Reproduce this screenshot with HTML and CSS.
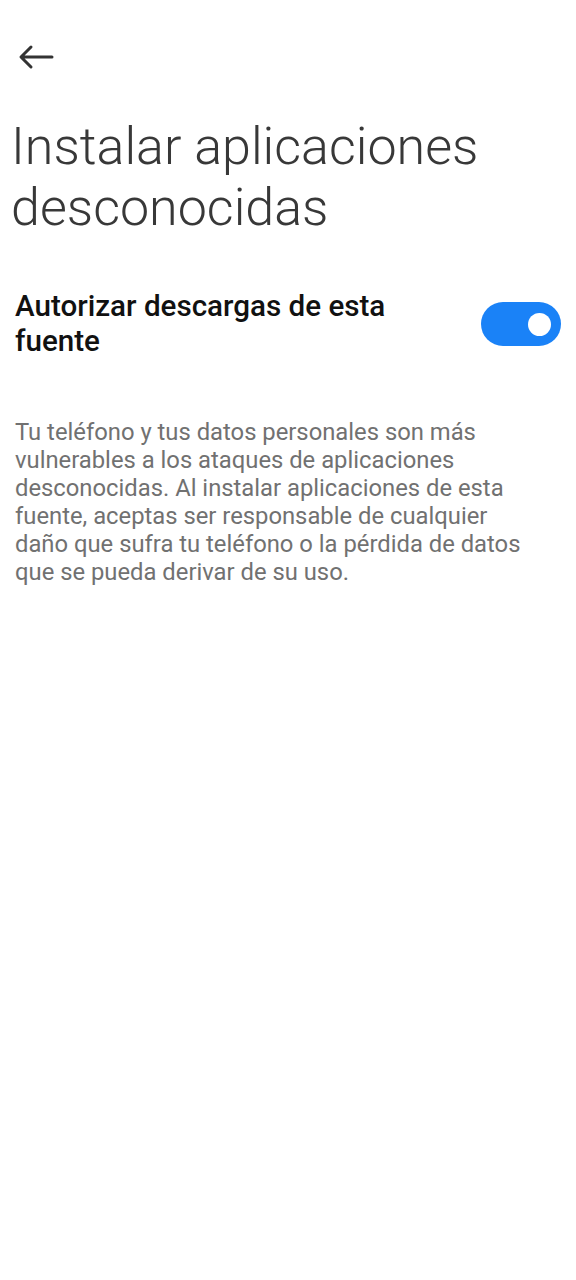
FILE: index.html
```html
<!DOCTYPE html>
<html lang="es">
<head>
<meta charset="utf-8">
<link rel="stylesheet" href="styles.css">
</head>
<body>
<div class="page">
  <header class="topbar">
    <svg class="back" width="40" height="30" viewBox="0 0 40 30">
      <path d="M35 15 H5 M14 5 L4 15 L14 25" fill="none" stroke="#333" stroke-width="3" stroke-linecap="round" stroke-linejoin="round"/>
    </svg>
  </header>
  <h1 class="title">Instalar aplicaciones desconocidas</h1>
  <div class="row">
    <div class="row-label">Autorizar descargas de esta fuente</div>
    <div class="toggle"><div class="knob"></div></div>
  </div>
  <p class="desc">Tu teléfono y tus datos personales son más vulnerables a los ataques de aplicaciones desconocidas. Al instalar aplicaciones de esta fuente, aceptas ser responsable de cualquier daño que sufra tu teléfono o la pérdida de datos que se pueda derivar de su uso.</p>
</div>
</body>
</html>
```
FILE: styles.css
```css
html, body { margin: 0; padding: 0; background: #fff; }
body { font-family: Roboto, "Noto Sans", sans-serif; width: 576px; height: 1280px; }
.page { display: flex; flex-direction: column; }
.topbar { height: 116px; display: flex; align-items: flex-start; padding: 42px 0 0 17px; box-sizing: border-box; }
.back { display: block; }
.title { margin: 0; padding: 0 20px 0 11px; font-weight: 300; font-size: 52px; line-height: 61px; color: #383838; letter-spacing: 0; }
.row { display: flex; align-items: center; justify-content: space-between; padding: 0 15px 0 15px; margin-top: 51px; }
.row-label { font-weight: 500; font-size: 29.6px; line-height: 35px; color: #111; width: 410px; }
.toggle { width: 80px; height: 44px; border-radius: 22px; background: #1a82f7; display: flex; align-items: center; justify-content: flex-end; padding-right: 10px; box-sizing: border-box; flex-shrink: 0; }
.knob { width: 23px; height: 23px; border-radius: 50%; background: #fff; }
.desc { margin: 59px 0 0; padding: 0 38px 0 15px; font-size: 23.8px; line-height: 28px; letter-spacing: 0; color: #717171; }
```
